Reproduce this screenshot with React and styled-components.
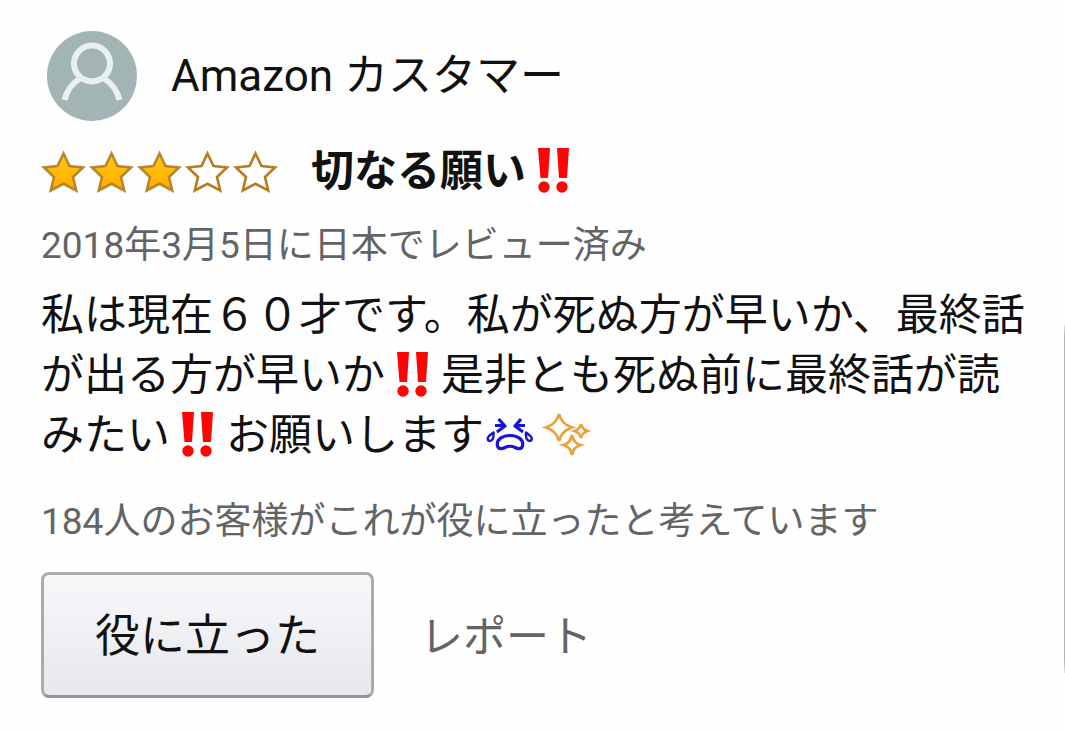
import React from "react";
import styled, { createGlobalStyle } from "styled-components";

const GlobalStyle = createGlobalStyle`
  * { box-sizing: border-box; }
  body {
    margin: 0;
    background: #fefefe;
    color: #111;
    font-family: Roboto, "Noto Sans CJK JP", sans-serif;
  }
`;

const Page = styled.main`
  position: relative;
  min-height: 100vh;
  padding: 31px 28px 32px 41px;
`;

const ScrollThumb = styled.div`
  position: absolute;
  top: 325px;
  right: 0;
  width: 1px;
  height: 348px;
  background: linear-gradient(#e4e4e4, #b4b4b4 12px, #b4b4b4 336px, #e4e4e4);
`;

const Author = styled.header`
  display: flex;
  align-items: center;
  gap: 34px;
  padding-left: 6px;
`;

const AvatarIcon = styled.svg`
  display: block;
  width: 90px;
  height: 90px;
`;

const AuthorName = styled.span`
  font-size: 44px;
  line-height: 60px;
`;

const Heading = styled.div`
  display: flex;
  align-items: center;
  gap: 30px;
  margin-top: 20px;
`;

const Rating = styled.div`
  display: flex;
`;

const StarIcon = styled.svg`
  display: block;
  width: 48px;
  height: 48px;
`;

const Title = styled.h1`
  margin: 0;
  font-size: 43px;
  line-height: 60px;
  font-weight: 700;
`;

const Meta = styled.p`
  margin: ${(p) => p.$top}px 0 0;
  color: #626466;
  font-size: 37px;
  line-height: 50px;
`;

const Body = styled.p`
  margin: 14px 0 0;
  font-size: 43px;
  line-height: 60px;
`;

const Emoji = styled.svg`
  width: 56px;
  height: 50px;
  vertical-align: -10px;
`;

const Actions = styled.div`
  display: flex;
  align-items: center;
  gap: 46px;
  margin-top: 25px;
`;

const HelpfulButton = styled.button`
  padding: 32px 51px 28px;
  border: 3px solid #a9abb0;
  border-bottom-color: #929499;
  border-radius: 8px;
  background: linear-gradient(#f7f8fa, #e7e8ec);
  color: #111;
  font-family: inherit;
  font-size: 45px;
  line-height: 60px;
`;

const ReportLink = styled.a`
  padding-top: 4px;
  color: #626466;
  font-size: 43px;
  line-height: 60px;
  text-decoration: none;
`;

function Avatar() {
  return (
    <AvatarIcon viewBox="0 0 90 90" aria-hidden="true">
      <circle cx="45" cy="45" r="45" fill="#a3b4b5" />
      <g fill="none" stroke="#e9f0f1" strokeWidth="6">
        <circle cx="45" cy="32.500" r="18" />
        <path d="M17.500 69C20 59 25 52 34 47M72.500 69C70 59 65 52 56 47" />
      </g>
    </AvatarIcon>
  );
}

function Star({ filled }) {
  return (
    <StarIcon viewBox="0 0 48 48" aria-hidden="true">
      <defs>
        <linearGradient id="starFill" x1="0" y1="0" x2="0" y2="1">
          <stop offset="0" stopColor="#ffcb12" />
          <stop offset="1" stopColor="#ffab00" />
        </linearGradient>
      </defs>
      <path
        d="M22.500 6.500L28.500 19L42 20.500L32 30L35.200 43.500L22.500 36.800L9.800 43.500L13 30L3 20.500L16.500 19Z"
        fill={filled ? "url(#starFill)" : "#fff"}
        stroke={filled ? "#b98625" : "#b87c1e"}
        strokeWidth="2.600"
      />
    </StarIcon>
  );
}

function DoubleBang() {
  return (
    <Emoji viewBox="0 0 56 50" role="img" aria-label="‼">
      <g fill="#fb0505">
        <path d="M12 2H24L22 32H14.500ZM31 2H43L41 32H33Z" />
        <circle cx="18" cy="41" r="5.700" />
        <circle cx="36" cy="41" r="5.700" />
      </g>
    </Emoji>
  );
}

function CryingFace() {
  return (
    <Emoji viewBox="0 0 56 50" role="img" aria-label="😭">
      <g fill="none" stroke="#1515d2" strokeWidth="3.200" strokeLinejoin="round">
        <path d="M14.500 9L21 16L13 22M11 15.500H21M37 9L31 16L39 22M41 15.500H31" />
        <path d="M9.500 22.500C10 28 8.500 31 6 31C3.500 31 3 28 5 26ZM42 22.500C41.500 28 43 31 45.500 31C48 31 48.500 28 46.500 26Z" strokeWidth="2.400" />
        <path d="M13.500 36C12 29 19 25.500 26 25.500S40 29 38.500 36C37.500 39.500 34 39 31 37.500C28 36 24 36 21 37.500C18 39 14.500 39.500 13.500 36Z" />
      </g>
    </Emoji>
  );
}

function Sparkles() {
  return (
    <Emoji viewBox="0 0 56 50" role="img" aria-label="✨">
      <g fill="none" stroke="#e9a23b" strokeWidth="2.800">
        <path d="M19 4Q21.500 14 32 17.500Q21.500 21 19 31Q16.500 21 6 17.500Q16.500 14 19 4Z" />
        <path d="M41 14Q42 19 47.500 21Q42 23 41 28Q40 23 34.500 21Q40 19 41 14Z" />
        <path d="M32 25Q33.500 33 40.500 35Q33.500 37 32 45Q30.500 37 23.500 35Q30.500 33 32 25Z" />
      </g>
    </Emoji>
  );
}

export default function App() {
  return (
    <>
      <GlobalStyle />
      <Page>
        <Author>
          <Avatar />
          <AuthorName>Amazon カスタマー</AuthorName>
        </Author>
        <Heading>
          <Rating role="img" aria-label="5つ星のうち3.0">
            {[1, 2, 3, 4, 5].map((n) => (
              <Star key={n} filled={n <= 3} />
            ))}
          </Rating>
          <Title>
            切なる願い
            <DoubleBang />
          </Title>
        </Heading>
        <Meta $top={20}>2018年3月5日に日本でレビュー済み</Meta>
        <Body>
          私は現在６０才です。私が死ぬ方が早いか、最終話が出る方が早いか
          <DoubleBang />
          是非とも死ぬ前に最終話が読みたい
          <DoubleBang />
          お願いします
          <CryingFace />
          <Sparkles />
        </Body>
        <Meta $top={32}>184人のお客様がこれが役に立ったと考えています</Meta>
        <Actions>
          <HelpfulButton type="button">役に立った</HelpfulButton>
          <ReportLink href="#report">レポート</ReportLink>
        </Actions>
        <ScrollThumb />
      </Page>
    </>
  );
}
